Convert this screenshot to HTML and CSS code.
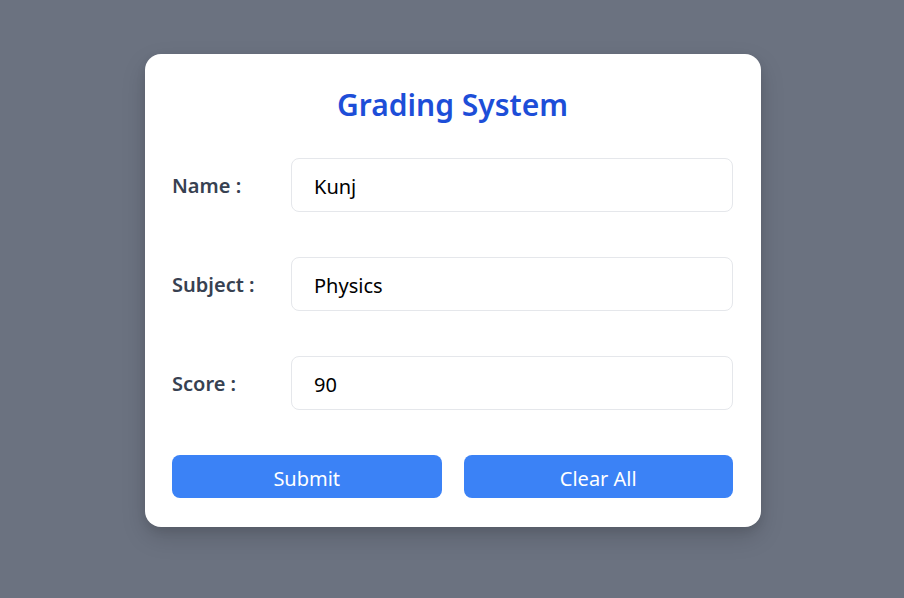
FILE: index.html
```html
<!DOCTYPE html>
<html>
<head>
<meta charset="utf-8">
<link rel="stylesheet" href="styles.css">
</head>
<body>
<div class="page">
  <div class="card">
    <h1 class="title">Grading System</h1>
    <div class="form">
      <div class="row">
        <label class="label">Name :</label>
        <div class="input">Kunj</div>
      </div>
      <div class="row">
        <label class="label">Subject :</label>
        <div class="input">Physics</div>
      </div>
      <div class="row">
        <label class="label">Score :</label>
        <div class="input">90</div>
      </div>
      <div class="buttons">
        <button class="btn">Submit</button>
        <button class="btn">Clear All</button>
      </div>
    </div>
  </div>
</div>
</body>
</html>
```

FILE: styles.css
```css
html, body {
  margin: 0;
  padding: 0;
  height: 100%;
}
body {
  background: #6b7280;
  font-family: "Noto Sans", "Open Sans", sans-serif;
}
.page {
  display: flex;
  justify-content: center;
  padding-top: 54px;
  padding-left: 2px;
}
.card {
  width: 616px;
  box-sizing: border-box;
  background: #ffffff;
  border-radius: 16px;
  padding: 33px 28px 29px 27px;
  box-shadow: 0 10px 25px rgba(0, 0, 0, 0.15), 0 4px 10px rgba(0, 0, 0, 0.08);
}
.title {
  margin: 0;
  text-align: center;
  font-size: 30px;
  line-height: 36px;
  font-weight: 600;
  color: #1d4ed8;
}
.form {
  display: flex;
  flex-direction: column;
  gap: 45px;
  margin-top: 35px;
}
.row {
  display: flex;
  align-items: center;
}
.label {
  width: 119px;
  flex-shrink: 0;
  font-size: 20px;
  font-weight: 600;
  color: #374151;
  padding-top: 1px;
}
.input {
  flex: 1;
  height: 54px;
  box-sizing: border-box;
  border: 1px solid #e5e7eb;
  border-radius: 8px;
  padding: 2px 22px 0;
  display: flex;
  align-items: center;
  font-size: 20px;
  color: #000;
}
.buttons {
  display: grid;
  grid-template-columns: 1fr 1fr;
  gap: 22px;
}
.btn {
  height: 43px;
  border: none;
  border-radius: 8px;
  background: #3b82f6;
  color: #ffffff;
  font-family: inherit;
  font-size: 20px;
  padding: 3px 0 0;
}
```
